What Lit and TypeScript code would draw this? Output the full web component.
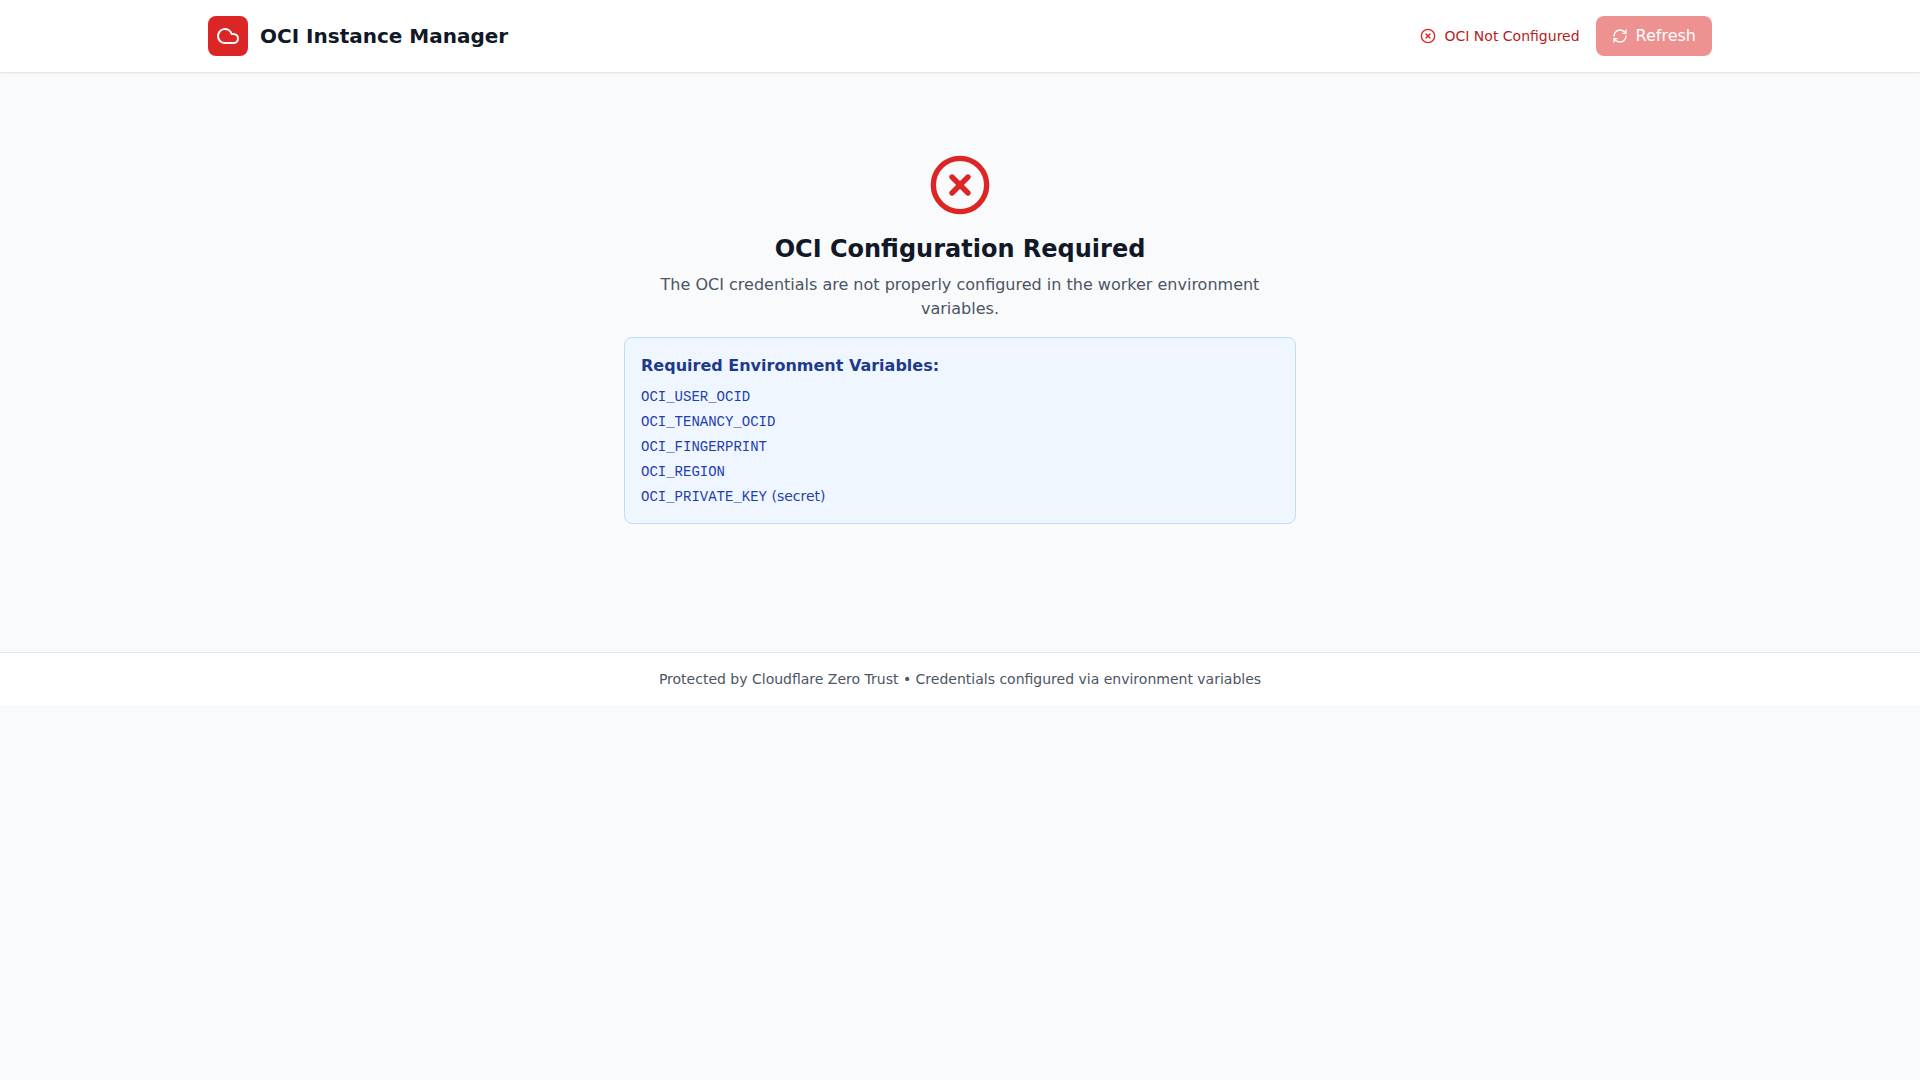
import { LitElement, html, css, svg } from "lit";
import { customElement } from "lit/decorators.js";

const crossCircle = svg`<circle cx="12" cy="12" r="10"></circle><path d="m15 9-6 6"></path><path d="m9 9 6 6"></path>`;

@customElement("app-root")
export class AppRoot extends LitElement {
  static styles = css`
    :host {
      display: block;
      min-height: 100vh;
      background: #f9fafb;
      color: #111827;
      font-family: "DejaVu Sans", sans-serif;
      font-size: 16px;
      line-height: 24px;
    }
    * { box-sizing: border-box; }
    h1, h2, h3, p, ul { margin: 0; padding: 0; }
    svg {
      display: block;
      flex: none;
      fill: none;
      stroke: currentColor;
      stroke-width: 2;
      stroke-linecap: round;
      stroke-linejoin: round;
    }
    header {
      background: #fff;
      border-bottom: 1px solid #e5e7eb;
      box-shadow: 0 1px 2px 0 rgb(0 0 0 / 0.05);
    }
    .bar {
      max-width: 1536px;
      margin: 0 auto;
      padding: 16px;
      display: flex;
      align-items: center;
      justify-content: space-between;
    }
    .brand, .actions { display: flex; align-items: center; }
    .brand { gap: 12px; }
    .actions { gap: 16px; }
    .logo {
      padding: 8px;
      border-radius: 8px;
      background: #dc2626;
      color: #fff;
    }
    h1 { font-size: 20px; line-height: 28px; font-weight: 700; }
    .status {
      display: flex;
      align-items: center;
      gap: 8px;
      color: #b91c1c;
      font-size: 14px;
      line-height: 20px;
    }
    .status svg { color: #dc2626; }
    .refresh {
      display: flex;
      align-items: center;
      gap: 8px;
      padding: 8px 16px;
      border: 0;
      border-radius: 8px;
      background: #dc2626;
      color: #fff;
      font: inherit;
      opacity: 0.5;
    }
    main {
      max-width: 1536px;
      margin: 0 auto;
      padding: 32px 16px;
    }
    .notice {
      max-width: 672px;
      margin: 0 auto;
      padding: 48px 0;
      text-align: center;
    }
    .notice > svg { margin: 0 auto 16px; color: #dc2626; }
    h2 { margin-bottom: 8px; font-size: 24px; line-height: 32px; font-weight: 700; }
    .lead { margin-bottom: 16px; color: #4b5563; }
    .vars {
      padding: 16px;
      border: 1px solid #bfdbfe;
      border-radius: 8px;
      background: #eff6ff;
      text-align: left;
    }
    h3 { margin-bottom: 8px; font-size: 16px; font-weight: 600; color: #1e3a8a; }
    ul {
      display: grid;
      gap: 4px;
      list-style: none;
      font-size: 14px;
      line-height: 20px;
      color: #1e40af;
    }
    code { font-family: "Liberation Mono", monospace; font-size: 14px; }
    footer {
      margin-top: 48px;
      padding: 16px;
      border-top: 1px solid #e5e7eb;
      background: #fff;
      color: #4b5563;
      text-align: center;
      font-size: 14px;
      line-height: 20px;
    }
  `;

  private variables = [
    { name: "OCI_USER_OCID", note: "" },
    { name: "OCI_TENANCY_OCID", note: "" },
    { name: "OCI_FINGERPRINT", note: "" },
    { name: "OCI_REGION", note: "" },
    { name: "OCI_PRIVATE_KEY", note: " (secret)" },
  ];

  render() {
    return html`
      <header>
        <div class="bar">
          <div class="brand">
            <div class="logo">
              <svg width="24" height="24" viewBox="0 0 24 24" aria-hidden="true">
                <path d="M17.5 19H9a7 7 0 1 1 6.71-9h1.79a4.5 4.5 0 1 1 0 9Z"></path>
              </svg>
            </div>
            <h1>OCI Instance Manager</h1>
          </div>
          <div class="actions">
            <div class="status">
              <svg width="16" height="16" viewBox="0 0 24 24" aria-hidden="true">${crossCircle}</svg>
              <span>OCI Not Configured</span>
            </div>
            <button class="refresh" type="button" disabled>
              <svg width="16" height="16" viewBox="0 0 24 24" aria-hidden="true">
                <path d="M3 12a9 9 0 0 1 9-9 9.75 9.75 0 0 1 6.74 2.74L21 8"></path>
                <path d="M21 3v5h-5"></path>
                <path d="M21 12a9 9 0 0 1-9 9 9.75 9.75 0 0 1-6.74-2.74L3 16"></path>
                <path d="M8 16H3v5"></path>
              </svg>
              <span>Refresh</span>
            </button>
          </div>
        </div>
      </header>
      <main>
        <section class="notice">
          <svg width="64" height="64" viewBox="0 0 24 24" aria-hidden="true">${crossCircle}</svg>
          <h2>OCI Configuration Required</h2>
          <p class="lead">The OCI credentials are not properly configured in the worker environment variables.</p>
          <div class="vars">
            <h3>Required Environment Variables:</h3>
            <ul>
              ${this.variables.map((v) => html`<li><code>${v.name}</code>${v.note}</li>`)}
            </ul>
          </div>
        </section>
      </main>
      <footer>Protected by Cloudflare Zero Trust • Credentials configured via environment variables</footer>
    `;
  }
}
